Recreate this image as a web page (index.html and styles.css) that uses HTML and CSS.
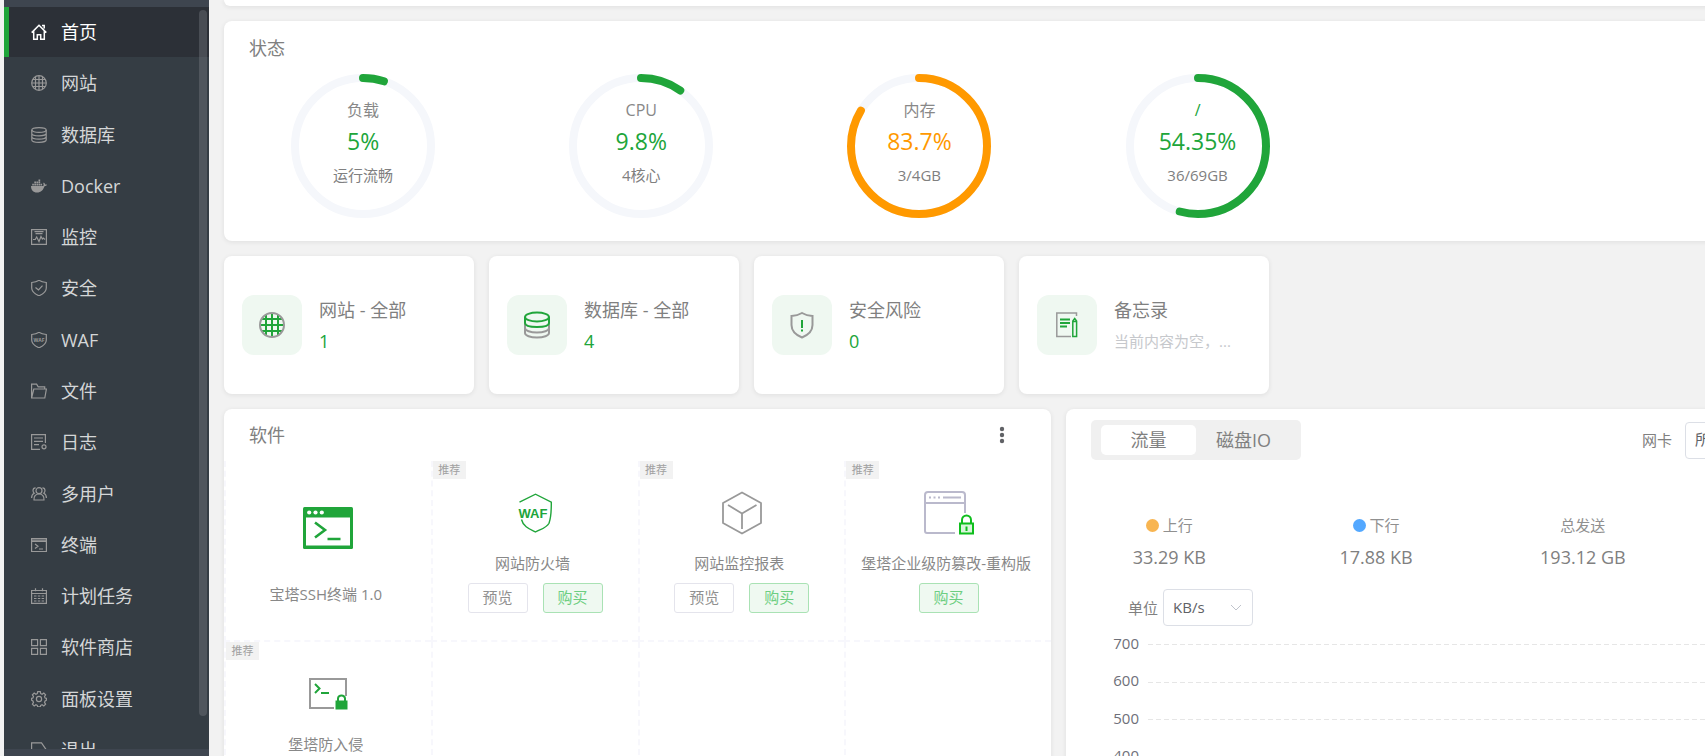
FILE: index.html
```html
<!DOCTYPE html>
<html lang="zh-CN">
<head>
    <meta charset="UTF-8">
    <meta name="viewport" content="width=device-width, initial-scale=1.0">
    <title>首页</title>
    <link rel="stylesheet" href="styles.css">
</head>
<body>
    <div class="app">
        <aside class="sidebar">
            <nav class="menu">
                <a href="#" class="menu-item active">
                    <svg class="menu-icon" viewBox="0 0 16 16"><path d="M.7 8.6 8 1.2l7.3 7.4M11 1.5h2.2v3M2.7 7.2v8h3.6v-4.4h3.4v4.4h3.6v-8"/></svg>
                    首页
                </a>
                <a href="#" class="menu-item">
                    <svg class="menu-icon" viewBox="0 0 16 16"><circle cx="8" cy="8" r="7.3"/><path d="M8 1v14M4.5 2v12M11.5 2v12M1 8h14M2 4.5h12M2 11.5h12"/></svg>
                    网站
                </a>
                <a href="#" class="menu-item">
                    <svg class="menu-icon" viewBox="0 0 16 16"><ellipse cx="8" cy="3" rx="7.2" ry="2.4"/><path d="M.8 3v10c0 1.300 3.200 2.400 7.200 2.400s7.200-1.100 7.200-2.400V3M.8 6.400c0 1.300 3.200 2.400 7.200 2.400s7.200-1.100 7.200-2.400M.8 9.800c0 1.300 3.200 2.400 7.200 2.400s7.200-1.100 7.200-2.400"/></svg>
                    数据库
                </a>
                <a href="#" class="menu-item">
                    <svg class="menu-icon solid" viewBox="0 0 16 16"><path d="M0 8h12.300c.5-1 .3-2.200-.1-2.800l.7-.7c.8.600 1.100 1.300 1.200 2 .7-.2 1.400-.1 1.900.3-.5 1-1.400 1.400-2.500 1.400C12.300 12 10 14.500 6 14.500 2 14.500 0 12 0 8zM1.200 5.700h1.700v1.700H1.200zM3.300 5.700H5v1.700H3.300zM5.400 5.700h1.700v1.700H5.400zM7.500 5.700h1.700v1.700H7.500zM9.600 5.700h1.500v1.700H9.600zM3.300 3.600H5v1.700H3.300zM5.400 3.600h1.700v1.700H5.400zM7.500 3.600h1.700v1.700H7.500zM7.500 1.500h1.700v1.700H7.500z"/></svg>
                    Docker
                </a>
                <a href="#" class="menu-item">
                    <svg class="menu-icon" viewBox="0 0 16 16"><path d="M.6.6h14.800v14.800H.6zM3.500 2.600h9M4.500 4.600h7M2 10.500h2.200l1.500-2.500 2.300 4.500 2-5 1.300 2.500 1-1 1.700 1.500"/></svg>
                    监控
                </a>
                <a href="#" class="menu-item">
                    <svg class="menu-icon" viewBox="0 0 16 16"><path d="M8 .3c2 1.400 4.500 2 7.300 2.200V8c0 3.500-3 6-7.300 7.800C3.700 14 .7 11.500.7 8V2.500C3.500 2.300 6 1.700 8 .3zM4.500 7.500 7.500 10l4-4.300"/></svg>
                    安全
                </a>
                <a href="#" class="menu-item">
                    <svg class="menu-icon" viewBox="0 0 16 16"><path d="M8 .3c2 1.400 4.500 2 7.300 2.200V8c0 3.500-3 6-7.300 7.800C3.700 14 .7 11.500.7 8V2.500C3.500 2.300 6 1.700 8 .3z"/><text class="icon-text" x="8" y="9.500" font-size="5" text-anchor="middle">WAF</text></svg>
                    WAF
                </a>
                <a href="#" class="menu-item">
                    <svg class="menu-icon" viewBox="0 0 16 16"><path d="M.6 15V1.200h5l1.600 2.600h6.500v2M.6 15 2.800 6h12.600l-1.600 9z"/></svg>
                    文件
                </a>
                <a href="#" class="menu-item">
                    <svg class="menu-icon" viewBox="0 0 16 16"><path d="M14.400 9V.6H.6v14.800H9M3 4h9M3 7.300h9M3 10.700h5"/><circle cx="13" cy="12.800" r="2"/></svg>
                    日志
                </a>
                <a href="#" class="menu-item">
                    <svg class="menu-icon" viewBox="0 0 16 16"><circle cx="8" cy="4.700" r="3"/><path d="M3 14c-.3-3.500 1.500-6 5-6s5.300 2.500 5 6zM4.600 1.800C2.800 1.800 2 3.200 2 4.600c0 1.200.5 2 1.200 2.600C1.300 8 .6 9.600.6 12M11.400 1.800c1.800 0 2.600 1.400 2.600 2.800 0 1.200-.5 2-1.200 2.600 1.900.8 2.600 2.400 2.600 4.800"/></svg>
                    多用户
                </a>
                <a href="#" class="menu-item">
                    <svg class="menu-icon" viewBox="0 0 16 16"><path d="M.6 1.500h14.800v13H.6zM1 3h14M1 4.300h14M4 7l3 2.300L4 11.600M8 12h4"/></svg>
                    终端
                </a>
                <a href="#" class="menu-item">
                    <svg class="menu-icon" viewBox="0 0 16 16"><path d="M.6 2.500h14.800v12.900H.6zM.6 5.500h14.800M4.500.3v3M11.500.3v3M3 8h2.500M6.800 8h2.500M10.600 8h2.500M3 10.500h2.500M6.800 10.500h2.500M10.600 10.500h2.500M3 13h2.500M6.800 13h2.500M10.600 13h2.500"/></svg>
                    计划任务
                </a>
                <a href="#" class="menu-item">
                    <svg class="menu-icon" viewBox="0 0 16 16"><path d="M.6.6h6v6h-6zM9.400.6h6v6h-6zM.6 9.400h6v6h-6zM9.400 9.400h6v6h-6z"/></svg>
                    软件商店
                </a>
                <a href="#" class="menu-item">
                    <svg class="menu-icon" viewBox="0 0 16 16"><circle cx="8" cy="8" r="2.600"/><path d="M6.700.7h2.600l.4 1.900 1.400.6 1.700-1.100 1.800 1.800-1.100 1.700.6 1.400 1.300.3v1.900l-1.300.8-.6 1.400 1.100 1.700-1.800 1.800-1.700-1.100-1.400.6-.4 1.400H6.700l-.4-1.400-1.400-.6-1.700 1.100-1.800-1.800 1.100-1.700-.6-1.400L.6 9.200V7.300l1.300-.3.6-1.400-1.100-1.700 1.800-1.800 1.700 1.100 1.400-.6z"/></svg>
                    面板设置
                </a>
                <a href="#" class="menu-item">
                    <svg class="menu-icon" viewBox="0 0 16 16"><path d="M15.400 8 10.500.8H.6v14.600h10zM11 12l4.400-4"/></svg>
                    退出
                </a>
            </nav>
            <span class="menu-scrollbar"></span>
        </aside>

        <main class="main">
            <div class="content">
                <div class="card card-top"></div>

                <section class="card status">
                    <h2 class="card-title">状态</h2>
                    <div class="gauges">
                        <div class="gauge green">
                            <svg class="gauge-ring" viewBox="0 0 144 144">
                                <circle class="track" cx="72" cy="72" r="68"/>
                                <circle class="value" cx="72" cy="72" r="68" pathLength="100" stroke-dasharray="5 100"/>
                            </svg>
                            <div class="gauge-text">
                                <span class="gauge-label">负载</span>
                                <span class="gauge-value">5%</span>
                                <span class="gauge-sub">运行流畅</span>
                            </div>
                        </div>
                        <div class="gauge green">
                            <svg class="gauge-ring" viewBox="0 0 144 144">
                                <circle class="track" cx="72" cy="72" r="68"/>
                                <circle class="value" cx="72" cy="72" r="68" pathLength="100" stroke-dasharray="9.8 100"/>
                            </svg>
                            <div class="gauge-text">
                                <span class="gauge-label">CPU</span>
                                <span class="gauge-value">9.8%</span>
                                <span class="gauge-sub">4核心</span>
                            </div>
                        </div>
                        <div class="gauge orange">
                            <svg class="gauge-ring" viewBox="0 0 144 144">
                                <circle class="track" cx="72" cy="72" r="68"/>
                                <circle class="value" cx="72" cy="72" r="68" pathLength="100" stroke-dasharray="83.7 100"/>
                            </svg>
                            <div class="gauge-text">
                                <span class="gauge-label">内存</span>
                                <span class="gauge-value">83.7%</span>
                                <span class="gauge-sub">3/4GB</span>
                            </div>
                        </div>
                        <div class="gauge green">
                            <svg class="gauge-ring" viewBox="0 0 144 144">
                                <circle class="track" cx="72" cy="72" r="68"/>
                                <circle class="value" cx="72" cy="72" r="68" pathLength="100" stroke-dasharray="54.35 100"/>
                            </svg>
                            <div class="gauge-text">
                                <span class="gauge-label disk">/</span>
                                <span class="gauge-value">54.35%</span>
                                <span class="gauge-sub">36/69GB</span>
                            </div>
                        </div>
                    </div>
                </section>

                <section class="overview">
                    <div class="card overview-item">
                        <span class="overview-icon">
                            <svg width="26" height="28" viewBox="0 0 26 28" fill="none" stroke="#20a53a" stroke-width="2"><path d="M13 2v24M7 4v20M19 4v20M2 14h22M3 8h20M3 20h20"/><circle cx="13" cy="14" r="12" stroke="#999"/></svg>
                        </span>
                        <div>
                            <div class="overview-title">网站 - 全部</div>
                            <a href="#" class="overview-value">1</a>
                        </div>
                    </div>
                    <div class="card overview-item">
                        <span class="overview-icon">
                            <svg width="26" height="28" viewBox="0 0 26 28" fill="none" stroke-width="2"><path d="M1 12v10c0 2.600 5.400 4.500 12 4.500s12-1.900 12-4.500V12M1 17c0 2.600 5.400 4.500 12 4.500S25 19.600 25 17" stroke="#999"/><path d="M1 6v6c0 2.600 5.400 4 12 4s12-1.400 12-4V6" stroke="#20a53a"/><ellipse cx="13" cy="6" rx="12" ry="4.500" stroke="#20a53a"/></svg>
                        </span>
                        <div>
                            <div class="overview-title">数据库 - 全部</div>
                            <a href="#" class="overview-value">4</a>
                        </div>
                    </div>
                    <div class="card overview-item">
                        <span class="overview-icon">
                            <svg width="26" height="28" viewBox="0 0 26 28" fill="none" stroke-width="2"><path d="M13 2c3 1.800 6.500 2.700 10.500 3v9c0 6-4.500 10-10.500 12.500C7 24 2.500 20 2.500 14V5C6.500 4.700 10 3.800 13 2z" stroke="#999"/><path d="M13 9v8M13 18.500v2" stroke="#20a53a"/></svg>
                        </span>
                        <div>
                            <div class="overview-title">安全风险</div>
                            <a href="#" class="overview-value">0</a>
                        </div>
                    </div>
                    <div class="card overview-item">
                        <span class="overview-icon">
                            <svg width="26" height="28" viewBox="0 0 26 28" fill="none" stroke-width="1.500"><path d="M22.500 5V2H2.800v23.500H17" stroke="#999"/><path d="M6 8.500h10M6 12h10M6 15.500h7" stroke="#20a53a" stroke-width="1.800"/><path d="M18.800 25.500V10l1.900-2.500 1.900 2.500v15.500zM18.800 10.500h3.800" stroke="#20a53a"/></svg>
                        </span>
                        <div>
                            <div class="overview-title">备忘录</div>
                            <div class="overview-note">当前内容为空，...</div>
                        </div>
                    </div>
                </section>

                <div class="panels">
                    <section class="card software">
                        <header class="software-header">
                            <h2 class="card-title">软件</h2>
                            <button class="more-button" title="更多">
                                <svg width="6" height="18" viewBox="0 0 6 18" fill="#606266"><circle cx="3" cy="3" r="2.200"/><circle cx="3" cy="9" r="2.200"/><circle cx="3" cy="15" r="2.200"/></svg>
                            </button>
                        </header>
                        <div class="software-grid">
                            <div class="software-item installed">
                                <span class="software-icon">
                                    <svg width="50" height="42" viewBox="0 0 50 42" fill="none"><rect width="50" height="42" rx="1.500" fill="#20a53a"/><path d="M3 10.500h44V38.500H3z" fill="#fff"/><circle cx="6.200" cy="5.500" r="2.100" fill="#fff"/><circle cx="12.500" cy="5.500" r="2.100" fill="#fff"/><circle cx="18.800" cy="5.500" r="2.100" fill="#fff"/><path d="M12 15.500 22 23 12 30.500M24.500 32h13" stroke="#20a53a" stroke-width="2.600"/></svg>
                                </span>
                                <span class="software-name">宝塔SSH终端 1.0</span>
                            </div>
                            <div class="software-item">
                                <span class="badge">推荐</span>
                                <span class="software-icon">
                                    <svg width="36" height="40" viewBox="0 0 36 40" fill="none" stroke="#20a53a" stroke-width="1.400"><path d="M2.500 9.200 18.500 1.200 34.300 9.200c0 8 .2 14-2.300 21-2 4.200-8 6-13.500 8.800C13 36.200 6 33.500 4.500 26.500"/><text class="waf-text" x="16" y="25" text-anchor="middle">WAF</text></svg>
                                </span>
                                <span class="software-name">网站防火墙</span>
                                <div class="software-actions">
                                    <button class="btn">预览</button>
                                    <button class="btn btn-buy">购买</button>
                                </div>
                            </div>
                            <div class="software-item">
                                <span class="badge">推荐</span>
                                <span class="software-icon">
                                    <svg width="40" height="44" viewBox="0 0 40 44" fill="none" stroke="#999" stroke-width="1.800" stroke-linejoin="round"><path d="M20 1.500 39 12v20L20 42.500 1 32V12zM6 14l14 8.500L34.500 14M20 22.500V38"/></svg>
                                </span>
                                <span class="software-name">网站监控报表</span>
                                <div class="software-actions">
                                    <button class="btn">预览</button>
                                    <button class="btn btn-buy">购买</button>
                                </div>
                            </div>
                            <div class="software-item">
                                <span class="badge">推荐</span>
                                <span class="software-icon">
                                    <svg width="50" height="44" viewBox="0 0 50 44" fill="none" stroke="#bab9cc" stroke-width="2"><path d="M41 22V4a3 3 0 0 0-3-3H4a3 3 0 0 0-3 3v36a2 2 0 0 0 2 2h28M1 12h40"/><path d="M5 6.500h2M9.500 6.500h2M14 6.500h2M19 6.500h18"/><path d="M38 32v-3a4.500 4.500 0 0 1 9 0v3" stroke="#0fbe1d"/><path d="M36 32.500h13v10H36z" stroke="#0fbe1d" fill="#d9f5db"/><path d="M42.500 35.500v4.500" stroke="#0fbe1d"/></svg>
                                </span>
                                <span class="software-name">堡塔企业级防篡改-重构版</span>
                                <div class="software-actions">
                                    <button class="btn btn-buy">购买</button>
                                </div>
                            </div>
                            <div class="software-item">
                                <span class="badge">推荐</span>
                                <span class="software-icon">
                                    <svg width="40" height="32" viewBox="0 0 40 32" fill="none" stroke-width="2"><path d="M38 18V1H2v29h24" stroke="#999"/><path d="M7 6l4.500 4.500L7 15M13 15h8" stroke="#20a53a"/><path d="M27.500 22.500h12v9h-12z" fill="#20a53a"/><path d="M30 23v-2.500a3.500 3 0 0 1 7 0V23" stroke="#20a53a"/></svg>
                                </span>
                                <span class="software-name">堡塔防入侵</span>
                                <div class="software-actions">
                                    <button class="btn">预览</button>
                                    <button class="btn btn-buy">购买</button>
                                </div>
                            </div>
                            <div class="software-item"></div>
                            <div class="software-item"></div>
                            <div class="software-item"></div>
                        </div>
                    </section>

                    <section class="card traffic">
                        <header class="traffic-header">
                            <div class="tabs">
                                <button class="tab active">流量</button>
                                <button class="tab">磁盘IO</button>
                            </div>
                            <div class="field">
                                <label for="network">网卡</label>
                                <span class="select select-wide">
                                    <select id="network">
                                        <option>所有</option>
                                    </select>
                                    <svg viewBox="0 0 12 8"><path d="M1 1l5 5 5-5"/></svg>
                                </span>
                            </div>
                        </header>
                        <div class="stats">
                            <div class="stat">
                                <span class="stat-label"><i class="dot dot-up"></i>上行</span>
                                <span class="stat-value">33.29 KB</span>
                            </div>
                            <div class="stat">
                                <span class="stat-label"><i class="dot dot-down"></i>下行</span>
                                <span class="stat-value">17.88 KB</span>
                            </div>
                            <div class="stat">
                                <span class="stat-label">总发送</span>
                                <span class="stat-value">193.12 GB</span>
                            </div>
                        </div>
                        <div class="field field-unit">
                            <label for="unit">单位</label>
                            <span class="select">
                                <select id="unit">
                                    <option>KB/s</option>
                                </select>
                                <svg viewBox="0 0 12 8"><path d="M1 1l5 5 5-5"/></svg>
                            </span>
                        </div>
                        <div class="chart">
                            <div class="chart-row">700</div>
                            <div class="chart-row">600</div>
                            <div class="chart-row">500</div>
                            <div class="chart-row">400</div>
                            <div class="chart-row">300</div>
                            <div class="chart-row">200</div>
                            <div class="chart-row">100</div>
                            <div class="chart-row">0</div>
                        </div>
                    </section>
                </div>
            </div>
        </main>
    </div>
</body>
</html>
```
FILE: styles.css
```css
* {
    margin: 0;
    padding: 0;
    box-sizing: border-box;
}

body {
    background: #f2f2f2;
    color: #808080;
    font-family: 'Open Sans', 'Noto Sans CJK SC', sans-serif;
    font-size: 15px;
    line-height: 24px;
    overflow: hidden;
}

button,
select {
    font: inherit;
    color: inherit;
    cursor: pointer;
}

a {
    text-decoration: none;
}

.app {
    display: flex;
    height: 100vh;
    padding-left: 4px;
}

/* Sidebar */
.sidebar {
    position: relative;
    flex: 0 0 205px;
    background: #353d44;
    border-top: 7px solid #3e454f;
    border-bottom: 7px solid #3e454f;
    overflow: hidden;
}

.menu {
    display: flex;
    flex-direction: column;
    justify-content: space-between;
    height: 768px;
}

.menu-item {
    display: flex;
    align-items: center;
    gap: 14px;
    height: 50px;
    padding-left: 22px;
    border-left: 5px solid transparent;
    color: #d4d6d7;
    font-size: 18px;
}

.menu-item.active {
    background: #2c3037;
    border-left-color: #20a53a;
    color: #fff;
}

.menu-icon {
    width: 16px;
    height: 16px;
    fill: none;
    stroke: #999;
    stroke-width: 1.2;
}

.menu-icon.solid {
    fill: #999;
    stroke: none;
}

.menu-item.active .menu-icon {
    stroke: #fff;
    stroke-width: 1.5;
}

.icon-text {
    fill: #999;
    stroke: none;
    font-weight: 700;
}

.menu-scrollbar {
    position: absolute;
    top: 3px;
    right: 2px;
    bottom: 33px;
    width: 8px;
    border-radius: 4px;
    background: rgba(144, 147, 153, 0.3);
}

/* Main */
.main {
    flex: 1;
    min-width: 0;
    padding-left: 15px;
    overflow: hidden;
}

.content {
    display: flex;
    flex-direction: column;
    gap: 15px;
    min-width: 1669px;
}

.card {
    background: #fff;
    border-radius: 8px;
    box-shadow: 0 1px 4px 1px rgba(0, 0, 0, 0.06);
}

.card-top {
    height: 6px;
    border-radius: 0 0 8px 8px;
}

.card-title {
    font-size: 18px;
    font-weight: inherit;
}

/* Status */
.status {
    padding: 15px 0 23px;
}

.status .card-title {
    padding-left: 25px;
}

.gauges {
    display: grid;
    grid-template-columns: repeat(6, 1fr);
    justify-items: center;
    margin-top: 14px;
}

.gauge {
    display: grid;
    width: 144px;
    height: 144px;
}

.gauge-ring,
.gauge-text {
    grid-area: 1 / 1;
}

.gauge-ring {
    transform: rotate(-90deg);
    fill: none;
    stroke-width: 8;
    stroke-linecap: round;
}

.gauge-ring .track {
    stroke: #f5f7fb;
}

.green .value {
    stroke: #20a53a;
}

.orange .value {
    stroke: #ff9900;
}

.gauge-text {
    display: flex;
    flex-direction: column;
    align-items: center;
    padding-top: 24px;
}

.gauge-label {
    font-size: 16px;
    color: #888;
}

.gauge-value {
    margin-top: 3px;
    font-size: 23px;
    line-height: 32px;
}

.gauge-sub {
    margin-top: 6px;
}

.green .gauge-value,
.gauge-label.disk {
    color: #20a53a;
}

.orange .gauge-value {
    color: #ff9900;
}

/* Overview */
.overview {
    display: flex;
    gap: 15px;
}

.overview-item {
    display: flex;
    align-items: center;
    gap: 17px;
    width: 250px;
    height: 138px;
    padding-left: 18px;
}

.overview-icon {
    display: flex;
    align-items: center;
    justify-content: center;
    width: 60px;
    height: 60px;
    border-radius: 12px;
    background: #eff8f1;
}

.overview-title {
    font-size: 18px;
    line-height: 32px;
}

.overview-value {
    display: block;
    color: #20a53a;
    font-size: 18px;
    line-height: 30px;
}

.overview-note {
    color: #c6c8cc;
    line-height: 30px;
}

/* Software */
.panels {
    display: grid;
    grid-template-columns: 1fr 1fr;
    gap: 15px;
}

.software-header {
    display: flex;
    align-items: center;
    justify-content: space-between;
    height: 52px;
    padding: 0 25px;
}

.more-button {
    display: flex;
    justify-content: center;
    width: 48px;
    border: none;
    background: none;
}

.software-grid {
    display: grid;
    grid-template-columns: repeat(4, 1fr);
    grid-auto-rows: 181px;
}

.software-item {
    position: relative;
    display: flex;
    flex-direction: column;
    align-items: center;
    padding-top: 27px;
    border-left: 2px dashed #f7f7fc;
    border-bottom: 2px dashed #f7f7fc;
}

.software-item.installed {
    padding-top: 42px;
}

.badge {
    position: absolute;
    top: 0;
    left: 0;
    width: 33px;
    background: #f2f2f2;
    color: #a0a0a0;
    font-size: 11px;
    line-height: 18px;
    text-align: center;
}

.software-icon {
    display: flex;
    align-items: center;
    justify-content: center;
    height: 50px;
}

.software-name {
    margin-top: 13px;
    padding-right: 5px;
    color: #888;
}

.installed .software-name {
    margin-top: 29px;
}

.software-actions {
    display: flex;
    gap: 15px;
    margin-top: 8px;
}

.btn {
    width: 60px;
    height: 30px;
    padding-bottom: 2px;
    border: 1px solid #e4e4ec;
    border-radius: 3px;
    background: #fff;
    color: #909090;
}

.btn-buy {
    background: #eff9f1;
    border-color: #a9e2b4;
    color: #6dce81;
}

.waf-text {
    fill: #20a53a;
    stroke: none;
    font-family: 'Liberation Sans', sans-serif;
    font-size: 13px;
    font-weight: 700;
}

/* Traffic */
.traffic {
    min-width: 0;
    padding-top: 11px;
}

.traffic-header {
    display: flex;
    align-items: center;
    justify-content: space-between;
    padding: 0 25px;
}

.tabs {
    display: flex;
    width: 210px;
    height: 40px;
    padding: 5px 10px;
    border-radius: 5px;
    background: #f0f0f0;
}

.tab {
    flex: 1;
    border: none;
    border-radius: 5px;
    background: none;
    font-size: 18px;
}

.tab.active {
    background: #fff;
}

.field {
    display: flex;
    align-items: center;
    gap: 13px;
}

.field-unit {
    gap: 5px;
    margin-top: 20px;
    padding-left: 62px;
}

.select {
    position: relative;
    width: 90px;
    height: 37px;
}

.select-wide {
    width: 183px;
}

.select select {
    width: 100%;
    height: 100%;
    padding: 0 9px 2px;
    border: 1px solid #dcdfe6;
    border-radius: 4px;
    background: #fff;
    color: #606266;
    appearance: none;
}

.select svg {
    position: absolute;
    top: 15px;
    right: 11px;
    width: 12px;
    height: 8px;
    fill: none;
    stroke: #c0c4cc;
    pointer-events: none;
}

.stats {
    display: grid;
    grid-template-columns: repeat(4, 1fr);
    margin-top: 53px;
}

.stat {
    display: flex;
    flex-direction: column;
    align-items: center;
    gap: 8px;
}

.stat-label {
    display: flex;
    align-items: center;
    gap: 4px;
    color: #909090;
}

.dot {
    width: 13px;
    height: 13px;
    border-radius: 50%;
}

.dot-up {
    background: #f8b551;
}

.dot-down {
    background: #53a8ff;
}

.stat-value {
    font-size: 18px;
}

.chart {
    display: grid;
    grid-template-rows: repeat(8, 1fr);
    height: 300px;
    margin-top: -2px;
    padding: 0 25px 0 46px;
}

.chart-row {
    display: grid;
    grid-template-columns: 27px 1fr;
    align-items: center;
    gap: 9px;
    color: #6e7079;
    text-align: right;
}

.chart-row::after {
    content: '';
    height: 1px;
    margin-top: 4px;
    background: repeating-linear-gradient(90deg, #e6e6e6 0 5px, transparent 5px 8px);
}
```
